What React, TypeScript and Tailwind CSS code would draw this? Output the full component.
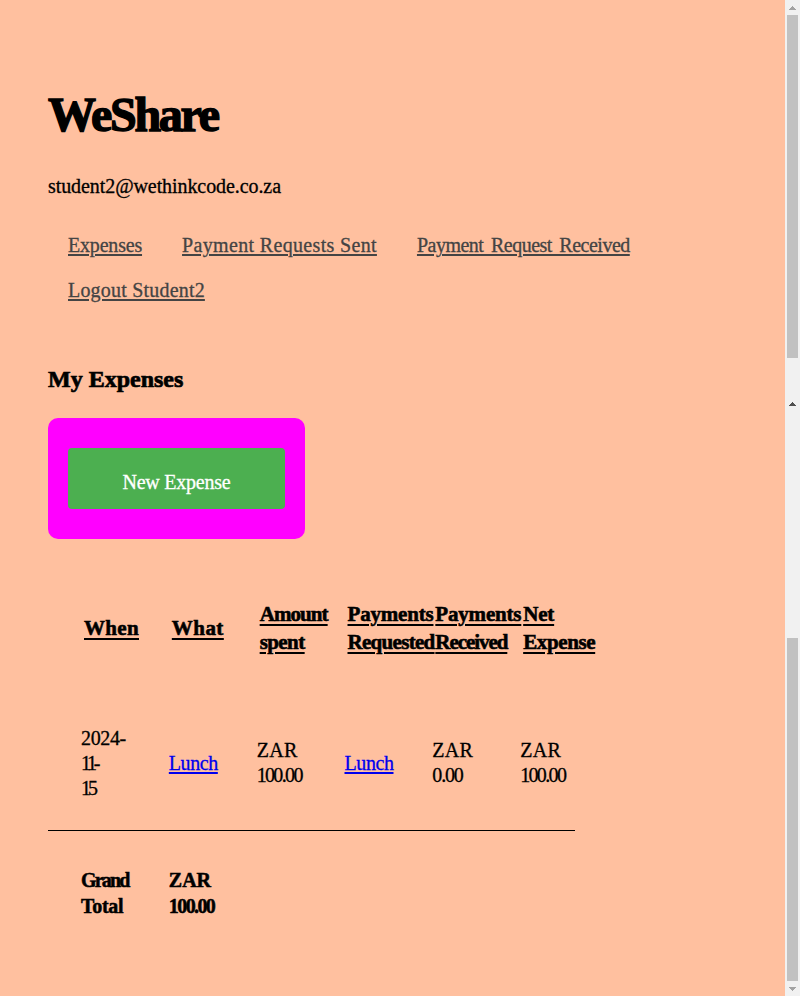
import type { ReactNode } from "react";

const navLinks = [
  { label: "Expenses", tracking: "tracking-[-0.19px]" },
  { label: "Payment Requests Sent", tracking: "tracking-[0.34px]" },
  { label: "Payment Request Received", tracking: "tracking-[-0.5px] [word-spacing:3px]" },
  { label: "Logout Student2", tracking: "tracking-[0.2px]" },
];

type Line = [text: string, tracking: string];

const headers: Line[][] = [
  [["When", "tracking-[0.33px]"]],
  [["What", "tracking-[0.45px]"]],
  [["Amount", "tracking-[-0.92px]"], ["spent", "tracking-[-0.57px]"]],
  [["Payments", "tracking-[-0.19px]"], ["Requested", "tracking-[-0.7px]"]],
  [["Payments", "tracking-[-0.19px]"], ["Received", "tracking-[-1.06px]"]],
  [["Net", "tracking-[-0.17px]"], ["Expense", "tracking-[-0.38px]"]],
];

const zar: Line = ["ZAR", "tracking-[0.3px]"];
const hundred: Line = ["100.00", "tracking-[-1.65px]"];

function Lines({ lines, className = "" }: { lines: Line[]; className?: string }) {
  return (
    <>
      {lines.map(([text, tracking]) => (
        <div key={text} className="whitespace-nowrap">
          <span className={`${tracking} ${className}`}>{text}</span>
        </div>
      ))}
    </>
  );
}

function Cell({ children }: { children: ReactNode }) {
  return <div className="min-w-0 pl-[33px]">{children}</div>;
}

function LunchLink() {
  return (
    <a
      href="#"
      className="tracking-[-0.42px] text-[#0000ee] underline decoration-2 underline-offset-[2px]"
    >
      Lunch
    </a>
  );
}

function Arrow({ down = false, dark = false }: { down?: boolean; dark?: boolean }) {
  return (
    <svg
      width="7"
      height="4"
      viewBox="0 0 7 4"
      shapeRendering="crispEdges"
      className={`${down ? "rotate-180" : ""} ${dark ? "text-[#505050]" : "text-[#a3a3a3]"}`}
    >
      <path d="M3 0h1v1h1v1h1v1h1v1H0V3h1V2h1V1h1z" fill="currentColor" />
    </svg>
  );
}

function Scrollbars() {
  return (
    <div className="flex w-[15px] shrink-0 flex-col items-center bg-[#f1f1f1]">
      <div className="flex h-[15px] items-center justify-center">
        <Arrow />
      </div>
      <div className="h-[343px] w-[11px] bg-[#c1c1c1]" />
      <div className="mt-[44px]">
        <Arrow dark />
      </div>
      <div className="mt-[232px] h-[343px] w-[11px] bg-[#c1c1c1]" />
      <div className="flex h-[15px] items-center justify-center">
        <Arrow down />
      </div>
    </div>
  );
}

export default function App() {
  return (
    <div className="flex h-[996px] w-[800px] overflow-hidden bg-[#ffc09f] font-['Liberation_Serif',serif] text-[20px] text-black [-webkit-text-stroke-width:0.3px]">
      <main className="min-w-0 flex-1 pl-12 pt-[85px]">
        <h1 className="text-[48px] font-bold leading-[60px] tracking-[-2.3px] [-webkit-text-stroke-width:1.4px]">
          WeShare
        </h1>
        <p className="mt-[26px] leading-[30px] tracking-[-0.08px]">student2@wethinkcode.co.za</p>
        <nav className="mt-[22px] flex flex-wrap gap-x-10 px-5">
          {navLinks.map(({ label, tracking }) => (
            <a
              key={label}
              href="#"
              className={`${tracking} leading-[45px] whitespace-nowrap text-[#444444] underline decoration-2 underline-offset-[2px]`}
            >
              {label}
            </a>
          ))}
        </nav>

        <h2 className="mt-[51px] text-[24px] font-bold leading-[30px] [-webkit-text-stroke-width:0.7px]">
          My Expenses
        </h2>
        <div className="mt-6 h-[121px] w-[257px] rounded-[10px] bg-[#ff00ff] px-5 py-[30px]">
          <button className="block h-[61px] w-full rounded-[4px] bg-[#4caf50] pt-[7px] leading-[54px] tracking-[-0.23px] text-white">
            New Expense
          </button>
        </div>

        <section className="mt-[61px] w-[527px]">
          <div className="grid h-14 grid-cols-6 items-center text-[21px] font-bold leading-7 [-webkit-text-stroke-width:0.6px]">
            {headers.map((lines, i) => (
              <div key={i} className="min-w-0 pl-9">
                <Lines lines={lines} className="underline decoration-2 underline-offset-[3px]" />
              </div>
            ))}
          </div>
          <div className="mt-[52px] grid h-[123px] grid-cols-6 items-center border-b border-black pb-[12px] leading-[25px]">
            <Cell>
              <Lines
                lines={[
                  ["2024-", "tracking-[-0.35px]"],
                  ["11-", "tracking-[-3.3px]"],
                  ["15", "tracking-[-3px]"],
                ]}
              />
            </Cell>
            <Cell>
              <LunchLink />
            </Cell>
            <Cell>
              <Lines lines={[zar, hundred]} />
            </Cell>
            <Cell>
              <LunchLink />
            </Cell>
            <Cell>
              <Lines lines={[zar, ["0.00", "tracking-[-1.2px]"]]} />
            </Cell>
            <Cell>
              <Lines lines={[zar, hundred]} />
            </Cell>
          </div>
          <div className="mt-[36px] grid grid-cols-6 font-bold leading-[26px] [-webkit-text-stroke-width:0.5px]">
            <Cell>
              <Lines
                lines={[
                  ["Grand", "tracking-[-1.8px]"],
                  ["Total", "tracking-[-0.3px]"],
                ]}
              />
            </Cell>
            <Cell>
              <Lines
                lines={[
                  ["ZAR", "tracking-normal"],
                  ["100.00", "tracking-[-1.6px]"],
                ]}
              />
            </Cell>
          </div>
        </section>
      </main>
      <Scrollbars />
    </div>
  );
}
